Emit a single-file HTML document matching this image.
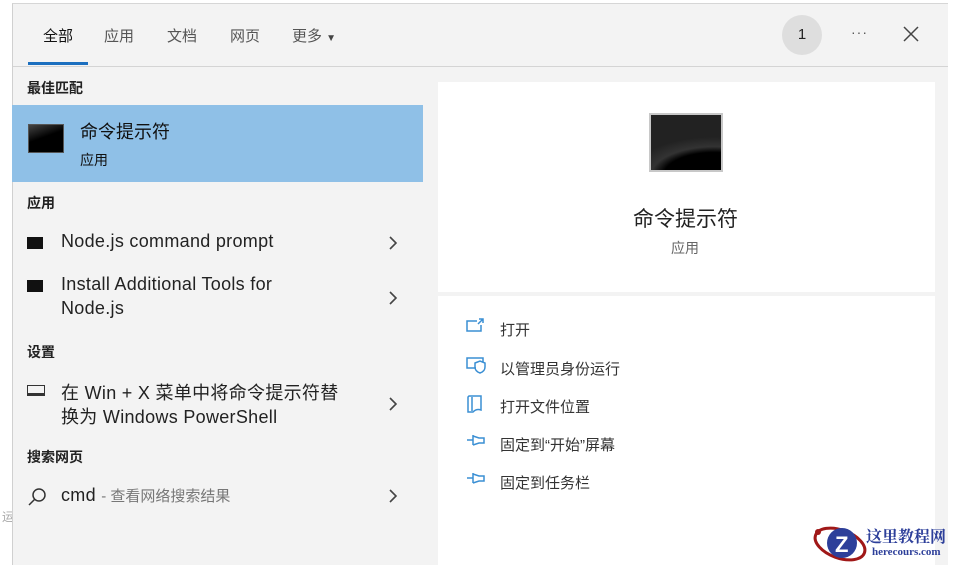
<!DOCTYPE html>
<html><head><meta charset="utf-8"><style>
*{margin:0;padding:0;box-sizing:border-box}
body{width:955px;height:565px;overflow:hidden;background:#fff;font-family:"Liberation Sans","Noto Sans CJK SC",sans-serif;position:relative;color:#1a1a1a}
.a{position:absolute;white-space:nowrap}
.win{position:absolute;left:12px;top:3px;width:936px;height:562px;background:#f3f3f3;border-left:1px solid #d0d0d0;border-top:1px solid #d6d6d6}
.tab{font-size:15px;color:#555;top:25px}
.hd{font-size:14px;font-weight:bold;color:#222}
.it{font-size:18px;color:#222;letter-spacing:.3px}
.chev{position:absolute;width:10px;height:16px}
.sq{position:absolute;width:16px;height:12px;background:#111}
.act{font-size:15px;color:#333}
</style></head><body>
<div class="a" style="left:2px;top:508px;font-size:12px;color:#aaa">运</div>
<div class="win"></div>
<div class="a tab" style="left:43px;color:#111">全部</div>
<div class="a tab" style="left:104px">应用</div>
<div class="a tab" style="left:167px">文档</div>
<div class="a tab" style="left:230px">网页</div>
<div class="a tab" style="left:292px">更多 <span style="font-size:10px;color:#444">▼</span></div>
<div class="a" style="left:28px;top:62px;width:60px;height:3px;background:#1c6fbf"></div>
<div class="a" style="left:13px;top:66px;width:935px;height:1px;background:#d4d4d4"></div>
<div class="a" style="left:782px;top:15px;width:40px;height:40px;border-radius:50%;background:#dedede;text-align:center;line-height:40px;font-size:15px;color:#222">1</div>
<div class="a" style="left:851px;top:24px;font-size:14px;color:#555;letter-spacing:1px">···</div>
<svg class="a" style="left:903px;top:26px" width="16" height="16"><path d="M1 1L15 15M15 1L1 15" stroke="#444" stroke-width="1.5"/></svg>
<div class="a hd" style="left:27px;top:78px">最佳匹配</div>
<div class="a" style="left:12px;top:105px;width:411px;height:77px;background:#8fc0e7"></div>
<div class="a" style="left:28px;top:124px;width:36px;height:29px;background:linear-gradient(160deg,#444,#000 45%);border:1px solid #555"></div>
<div class="a" style="left:80px;top:118px;font-size:18px;color:#111">命令提示符</div>
<div class="a" style="left:80px;top:150px;font-size:14px;color:#111">应用</div>
<div class="a hd" style="left:27px;top:193px">应用</div>
<div class="sq" style="left:27px;top:237px"></div>
<div class="a it" style="left:61px;top:231px">Node.js command prompt</div>
<svg class="chev" style="left:388px;top:235px"><path d="M2 2l6 6-6 6" fill="none" stroke="#444" stroke-width="1.6"/></svg>
<div class="sq" style="left:27px;top:280px"></div>
<div class="a it" style="left:61px;top:274px">Install Additional Tools for</div>
<div class="a it" style="left:61px;top:298px">Node.js</div>
<svg class="chev" style="left:388px;top:290px"><path d="M2 2l6 6-6 6" fill="none" stroke="#444" stroke-width="1.6"/></svg>
<div class="a hd" style="left:27px;top:342px">设置</div>
<div class="a" style="left:27px;top:385px;width:18px;height:11px;border:1.5px solid #333;border-bottom-width:3px"></div>
<div class="a it" style="left:61px;top:379px">在 Win + X 菜单中将命令提示符替</div>
<div class="a it" style="left:61px;top:403px">换为 Windows PowerShell</div>
<svg class="chev" style="left:388px;top:396px"><path d="M2 2l6 6-6 6" fill="none" stroke="#444" stroke-width="1.6"/></svg>
<div class="a hd" style="left:27px;top:447px">搜索网页</div>
<svg class="a" style="left:27px;top:487px" width="20" height="20"><circle cx="12" cy="8" r="6" fill="none" stroke="#333" stroke-width="1.5"/><path d="M8 12L2 18" stroke="#333" stroke-width="1.5"/></svg>
<div class="a it" style="left:61px;top:485px">cmd <span style="font-size:15px;color:#777;letter-spacing:0">- 查看网络搜索结果</span></div>
<svg class="chev" style="left:388px;top:488px"><path d="M2 2l6 6-6 6" fill="none" stroke="#444" stroke-width="1.6"/></svg>
<div class="a" style="left:438px;top:82px;width:497px;height:210px;background:#fff"></div>
<div class="a" style="left:438px;top:296px;width:497px;height:269px;background:#fff"></div>
<div class="a" style="left:649px;top:113px;width:74px;height:59px;background:radial-gradient(ellipse 120% 70% at 90% 110%,#000 60%,#333 75%,#222);border:2px solid #c8c8c8"></div>
<div class="a" style="left:633px;top:203px;font-size:21px;color:#222">命令提示符</div>
<div class="a" style="left:671px;top:238px;font-size:14px;color:#666">应用</div>
<svg class="a" style="left:466px;top:318px" width="20" height="16" fill="none" stroke="#3a8fd4" stroke-width="1.5"><path d="M11 3H1V13H15V7M13 1h4v4M17 1l-5 5"/></svg>
<div class="a act" style="left:500px;top:319px">打开</div>
<svg class="a" style="left:466px;top:357px" width="20" height="18" fill="none" stroke="#3a8fd4" stroke-width="1.5"><path d="M10 11H1V1H17V5M9 6l5-2 5 2v4c0 3-2 5-5 6-3-1-5-3-5-6z"/></svg>
<div class="a act" style="left:500px;top:358px">以管理员身份运行</div>
<svg class="a" style="left:466px;top:394px" width="18" height="20" fill="none" stroke="#3a8fd4" stroke-width="1.5"><path d="M3 2h12v14c-3-1-6 0-8 2H2V3zM6 3v14"/></svg>
<div class="a act" style="left:500px;top:396px">打开文件位置</div>
<svg class="a" style="left:466px;top:433px" width="20" height="14" fill="none" stroke="#3a8fd4" stroke-width="1.5"><path d="M1 7h6M7 2v10M7 3l6 2h5v5h-5l-6 2"/></svg>
<div class="a act" style="left:500px;top:434px">固定到“开始”屏幕</div>
<svg class="a" style="left:466px;top:471px" width="20" height="14" fill="none" stroke="#3a8fd4" stroke-width="1.5"><path d="M1 7h6M7 2v10M7 3l6 2h5v5h-5l-6 2"/></svg>
<div class="a act" style="left:500px;top:472px">固定到任务栏</div>
<svg class="a" style="left:808px;top:522px" width="62" height="42"><ellipse cx="32" cy="22" rx="26" ry="14" fill="none" stroke="#a01818" stroke-width="3" transform="rotate(20 32 22)"/><circle cx="34" cy="21" r="15" fill="#2d3f9a"/><text x="27" y="30" font-size="22" font-weight="bold" fill="#fff" font-family="Liberation Sans">Z</text><circle cx="10" cy="10" r="3" fill="#a01818"/></svg>
<div class="a" style="left:866px;top:524px;font-size:16px;font-weight:bold;color:#2d3f9a;font-family:'Noto Serif CJK SC',serif">这里教程网</div>
<div class="a" style="left:872px;top:546px;font-size:11px;font-weight:bold;color:#2d3f9a;font-family:'Liberation Serif',serif">herecours.com</div>
</body></html>
